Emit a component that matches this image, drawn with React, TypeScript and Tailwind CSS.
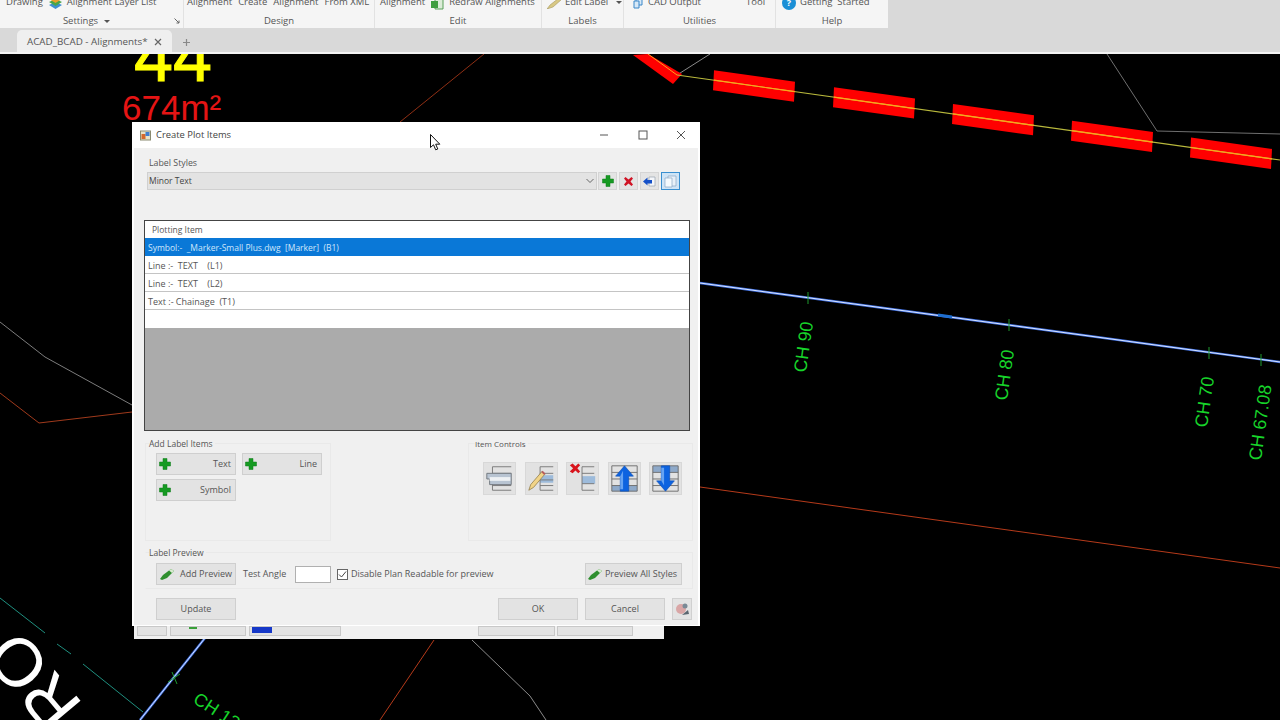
import type { ReactNode } from "react";

const uiFont = { fontFamily: '"Open Sans", "Noto Sans", sans-serif' };
const cadFont = '"Liberation Sans", Arial, sans-serif';

const PlusIcon = () => (
  <svg width="12" height="12" viewBox="0 0 12 12">
    <path d="M4 0.5h4v3.5h3.5v4H8v3.5H4V8H0.5V4H4z" fill="#169a22" stroke="#0f7d1a" strokeWidth="0.5" />
  </svg>
);

const MarkerIcon = () => (
  <svg width="16" height="14" viewBox="0 0 16 14">
    <path d="M1 12 L4 8 L12 2 L15 4 L8 11 L3 13z" fill="#2f8f2f" />
    <path d="M10 3.5 L12 2 L15 4 L13 6z" fill="#d8ead0" />
  </svg>
);

function Btn({ children, className }: { children: ReactNode; className: string }) {
  return (
    <div className={`flex items-center border border-[#cfcfcf] bg-[#e3e3e3] text-[#555] ${className}`}>
      {children}
    </div>
  );
}

function AddBtn({ label }: { label: string }) {
  return (
    <Btn className="h-[22px] w-[80px] justify-between pl-[2px] pr-[4px]">
      <PlusIcon />
      <span>{label}</span>
    </Btn>
  );
}

function ToolBtn({ children }: { children: ReactNode }) {
  return <div className="flex h-[18px] w-[19px] items-center justify-center border border-[#d5d5d5] bg-[#e4e4e4]">{children}</div>;
}

const TableLines = ({ x = 9 }: { x?: number }) => (
  <path d={`M${x} 4H29M${x} 4V29M${x} 11H29M${x} 18H29M${x} 24H29M${x} 29H29`} stroke="#777" strokeWidth="1" fill="none" />
);

function CtrlIcon({ kind }: { kind: string }) {
  return (
    <div className="h-[33px] w-[33px] border border-[#d8d8d8] bg-[#e2e2e2]">
      <svg width="31" height="31" viewBox="0 0 33 33">
        {kind === "slab" && (
          <g>
            <TableLines />
            <path d="M3 11H29V23H6V17H3z" fill="#b8c4d2" stroke="#70767d" strokeWidth="1" />
            <path d="M6 15H28V19H6z" fill="#eef1f4" />
          </g>
        )}
        {kind === "edit" && (
          <g>
            <rect x="15" y="13" width="14" height="8" fill="#9dbbdb" />
            <TableLines x={15} />
            <path d="M3 29 L5 23 L17 9 L20 12 L8 26z" fill="#f1d488" stroke="#8d7a45" strokeWidth="0.8" />
            <path d="M17 9 L20 12" stroke="#b85d5d" strokeWidth="2" />
          </g>
        )}
        {kind === "remove" && (
          <g>
            <rect x="16" y="14" width="14" height="8" fill="#9dbbdb" />
            <path d="M16 4H29M16 4V29M16 11H29M16 22H29M16 29H29" stroke="#777" fill="none" />
            <path d="M3 2.5 L6 0.5 L9 3.5 L12 0.5 L14 2.5 L11 5.5 L14 9 L12 11 L9 8 L6 11 L3 9 L6.500 5.500z" fill="#d8141c" />
          </g>
        )}
        {kind === "up" && (
          <g>
            <rect x="3" y="24" width="27" height="6" fill="#8ea9c9" />
            <path d="M3 3H30V30H3zM3 10H30M3 17H30M3 24H30" stroke="#6e6e6e" fill="none" />
            <path d="M16.500 3 L26 14 H21 V30 H12 V14 H7z" fill="#0d63e0" stroke="#0a4bb0" strokeWidth="0.6" />
            <path d="M15 8 L12 14 V28 H15z" fill="#66a3f2" />
          </g>
        )}
        {kind === "down" && (
          <g>
            <rect x="3" y="3" width="27" height="7" fill="#8ea9c9" />
            <path d="M3 3H30V30H3zM3 10H30M3 17H30M3 24H30" stroke="#6e6e6e" fill="none" />
            <path d="M16.500 30 L26 19 H21 V3 H12 V19 H7z" fill="#0d63e0" stroke="#0a4bb0" strokeWidth="0.6" />
            <path d="M12 5 H15 V24 L12 19z" fill="#66a3f2" />
          </g>
        )}
      </svg>
    </div>
  );
}

function RibbonPanel({ width, label, children, border = true }: { width: string; label: ReactNode; children: ReactNode; border?: boolean }) {
  return (
    <div className={`relative flex h-[28px] shrink-0 flex-col ${width} ${border ? "border-r border-[#e2e2e2]" : ""}`}>
      <div className="-mt-[5px] flex h-[15px] items-center whitespace-nowrap">{children}</div>
      <div className="mt-[4px] flex h-[14px] items-center justify-center">{label}</div>
    </div>
  );
}

function Ribbon() {
  return (
    <div className="flex h-[28px] overflow-hidden bg-[#d9d9d9] text-[9.500px] text-[#555]">
      <div className="flex w-[888px] bg-[#f5f5f5]">
        <RibbonPanel
          width="w-[184px]"
          label={
            <span className="flex items-center gap-[6px] pr-[10px]">
              Settings
              <span className="h-0 w-0 border-x-[3px] border-t-[3px] border-x-transparent border-t-[#555]" />
            </span>
          }
        >
          <span className="ml-[6px]">Drawing</span>
          <svg className="ml-[6px]" width="13" height="14" viewBox="0 0 13 14">
            <path d="M6.500 6 L13 9 L6.500 13 L0 9z" fill="#3f8fd0" />
            <path d="M6.500 3 L13 6 L6.500 10 L0 6z" fill="#4aa54a" />
            <path d="M6.500 0 L13 3 L6.500 7 L0 3z" fill="#e8a02c" />
          </svg>
          <span className="ml-[5px]">Alignment Layer List</span>
          <svg className="absolute left-[174px] top-[18px]" width="6" height="6" viewBox="0 0 6 6">
            <path d="M0.500 0.500L5 5M5 2.500V5H2.500" stroke="#666" fill="none" />
          </svg>
        </RibbonPanel>
        <RibbonPanel width="w-[191px]" label="Design">
          <span className="ml-[3px] flex gap-[6px]">
            <span>Alignment</span>
            <span>Create</span>
            <span>Alignment</span>
            <span>From XML</span>
          </span>
        </RibbonPanel>
        <RibbonPanel width="w-[167px]" label="Edit">
          <span className="ml-[5px]">Alignment</span>
          <svg className="ml-[6px]" width="14" height="14" viewBox="0 0 14 14">
            <path d="M4 2H12V13H4z" fill="#dcecd8" stroke="#58a058" />
            <path d="M0 5H7V12H0z" fill="#3f9e3f" />
          </svg>
          <span className="ml-[4px]">Redraw Alignments</span>
        </RibbonPanel>
        <RibbonPanel width="w-[82px]" label="Labels">
          <svg className="ml-[5px]" width="14" height="12" viewBox="0 0 14 12">
            <path d="M0 12 L3 8 L12 1 L14 3 L6 10z" fill="#d8c884" stroke="#9a8c50" strokeWidth="0.5" />
          </svg>
          <span className="ml-[4px]">Edit Label</span>
          <span className="ml-[8px] h-0 w-0 border-x-[3px] border-t-[3px] border-x-transparent border-t-[#555]" />
        </RibbonPanel>
        <RibbonPanel width="w-[152px]" label="Utilities">
          <svg className="ml-[9px]" width="10" height="12" viewBox="0 0 10 12">
            <path d="M3 1H9V8H3z" fill="#d6e8f7" stroke="#3b87c8" />
            <path d="M1 4H6V11H1z" fill="#d6e8f7" stroke="#3b87c8" />
          </svg>
          <span className="ml-[5px]">CAD Output</span>
          <span className="ml-[45px]">Tool</span>
        </RibbonPanel>
        <RibbonPanel width="w-[112px]" border={false} label="Help">
          <span className="ml-[6px] flex h-[14px] w-[14px] items-center justify-center rounded-full bg-[#1a8fd6] text-[9px] font-bold text-white">?</span>
          <span className="ml-[4px]">Getting&nbsp;&nbsp;Started</span>
        </RibbonPanel>
      </div>
    </div>
  );
}

function TabBar() {
  return (
    <div className="flex h-[26px] items-start border-b-2 border-[#f4f4f4] bg-[#d9d9d9] text-[9.800px] text-[#555]">
      <div className="ml-[17px] mt-[2px] flex h-[22px] w-[155px] items-center rounded-t-[5px] bg-[#efefef] pl-[10px] pt-[2px]">
        <span className="whitespace-nowrap">ACAD_BCAD - Alignments*</span>
        <svg className="ml-[6px]" width="8" height="8" viewBox="0 0 8 8">
          <path d="M1 1L7 7M7 1L1 7" stroke="#666" strokeWidth="1.2" />
        </svg>
      </div>
      <svg className="ml-[10px] mt-[10px]" width="9" height="9" viewBox="0 0 9 9">
        <path d="M4.500 1V8M1 4.500H8" stroke="#888" strokeWidth="1.2" />
      </svg>
    </div>
  );
}

const BAND_SLOPE = 0.141;
const bandStarts = [714, 834, 953, 1072, 1191];
const bandY = (x: number) => 75 + (x - 677) * BAND_SLOPE;
const bands = bandStarts.map((x) => {
  const end = x + 81;
  return `${x},${bandY(x) - 10} ${end},${bandY(end) - 10} ${end - 1},${bandY(end) + 10} ${x - 1},${bandY(x) + 10}`;
});

const ticks = [
  [808, 298],
  [1009, 325],
  [1209, 353],
  [1261, 360],
];

const chLabels = [
  { text: "CH 90", x: 806, y: 373 },
  { text: "CH 80", x: 1007, y: 401 },
  { text: "CH 70", x: 1207, y: 428 },
  { text: "CH 67.08", x: 1261, y: 461 },
];

function Drawing() {
  return (
    <svg className="h-full w-full" viewBox="0 54 1280 666">
      <text x="134" y="81" fontFamily={cadFont} fontSize="70" fill="#ffff00" stroke="#ffff00" strokeWidth="1">
        44
      </text>
      <text x="122" y="120" fontFamily={cadFont} fontSize="35" fill="#e51414">
        674m²
      </text>
      <path d="M484 54L400 122" stroke="#8f2f14" strokeWidth="1" />
      <path d="M677 75L710 54" stroke="#8a8a8a" strokeWidth="1" />
      <path d="M1107 54L1157 131L1280 134" stroke="#6f6f6f" strokeWidth="1" fill="none" />
      <polygon points="633,55 648,54 682,74 673,84" fill="#ff0000" />
      {bands.map((p) => (
        <polygon key={p} points={p} fill="#ff0000" />
      ))}
      <path d={`M677 75L1280 ${bandY(1280)}`} stroke="#b9b93c" strokeWidth="1.200" />
      {bandStarts.map((x) => (
        <path key={x} d={`M${x} ${bandY(x)}L${x + 81} ${bandY(x + 81)}`} stroke="#ffa31a" strokeWidth="1.200" />
      ))}
      <path d="M648 54L677 75" stroke="#ffa31a" strokeWidth="1" />

      <path d="M700 283L1280 362" stroke="#3f6fe0" strokeWidth="2.400" />
      <path d="M700 283L1280 362" stroke="#d8e4ff" strokeWidth="1" />
      <path d="M938 315L952 317" stroke="#1f6fd0" strokeWidth="3" />
      {ticks.map(([x, y]) => (
        <path key={x} d={`M${x} ${y - 6}V${y + 6}`} stroke="#1f9a2f" strokeWidth="1" />
      ))}
      {chLabels.map((l) => (
        <text key={l.text} x={l.x} y={l.y} transform={`rotate(-82 ${l.x} ${l.y})`} fontFamily={cadFont} fontSize="18" fill="#17d42a">
          {l.text}
        </text>
      ))}

      <path d="M0 322L45 357L132 405" stroke="#7c7c7c" strokeWidth="1" fill="none" />
      <path d="M0 393L39 423L132 412" stroke="#a03a1c" strokeWidth="1" fill="none" />
      <path d="M700 487L1280 568" stroke="#b53a1a" strokeWidth="1" />

      <path d="M0 598L45 633M57 644L71 654M83 664L143 712" stroke="#1f8f7f" strokeWidth="1" />
      <path d="M205 638L140 720" stroke="#3f6fe0" strokeWidth="2.400" />
      <path d="M205 638L140 720" stroke="#d8e4ff" strokeWidth="1" />
      <path d="M168 682L180 674M172 672L177 684" stroke="#1f9a2f" strokeWidth="1" />
      <text x="192" y="702" transform="rotate(33 192 702)" fontFamily={cadFont} fontSize="18" fill="#17d42a">
        CH 130
      </text>
      <text x="84" y="705" transform="rotate(-130 84 705)" fontFamily={cadFont} fontSize="68" fill="#ffffff">
        RO
      </text>
      <path d="M434 640L380 720" stroke="#b53a1a" strokeWidth="1" />
      <path d="M472 640L530 696L546 720" stroke="#8a8a8a" strokeWidth="1" fill="none" />
    </svg>
  );
}

function BehindWindow() {
  return (
    <div className="absolute left-[134px] top-[600px] flex h-[39px] w-[530px] items-end bg-[#f0f0f0] pb-[3px]">
      <div className="ml-[3px] h-[10px] w-[30px] border border-[#c8c8c8] bg-[#e3e3e3]" />
      <div className="relative ml-[3px] h-[10px] w-[76px] border border-[#c8c8c8] bg-[#e3e3e3]">
        <div className="absolute left-[18px] top-0 h-[2px] w-[8px] bg-[#3aa03a]" />
      </div>
      <div className="relative ml-[3px] h-[10px] w-[92px] border border-[#c8c8c8] bg-[#e3e3e3]">
        <div className="absolute left-[2px] top-0 h-[6px] w-[20px] bg-[#1638c8]" />
      </div>
      <div className="ml-[137px] h-[10px] w-[77px] border border-[#c8c8c8] bg-[#e3e3e3]" />
      <div className="ml-[2px] h-[10px] w-[76px] border border-[#c8c8c8] bg-[#e3e3e3]" />
    </div>
  );
}

const rows = ["Line :-  TEXT    (L1)", "Line :-  TEXT    (L2)", "Text :- Chainage  (T1)"];

function PlotDialog() {
  return (
    <div className="absolute left-[132px] top-[122px] flex h-[504px] w-[568px] flex-col bg-[#f0f0f0] text-[9px] text-[#555] shadow-[inset_2px_0_0_#fff,inset_-2px_0_0_#fff,inset_0_-1px_0_#fff]" style={uiFont}>
      <div className="flex h-[26px] shrink-0 items-center bg-white pl-[8px]">
        <svg width="11" height="11" viewBox="0 0 11 11">
          <rect x="0.500" y="1" width="10" height="9" fill="#e8e4c8" stroke="#8a8a70" />
          <rect x="1.500" y="4" width="4" height="5" fill="#d46a2c" />
          <rect x="5.500" y="2" width="4" height="4" fill="#3f7fd0" />
        </svg>
        <span className="ml-[5px] text-[9.400px] text-[#444]">Create Plot Items</span>
        <div className="ml-auto flex items-center">
          <svg width="10" height="10" viewBox="0 0 10 10" className="mr-[29px]">
            <path d="M1 5H9" stroke="#555" />
          </svg>
          <svg width="10" height="10" viewBox="0 0 10 10" className="mr-[28px]">
            <rect x="1" y="1" width="8" height="8" fill="none" stroke="#555" />
          </svg>
          <svg width="10" height="10" viewBox="0 0 10 10" className="mr-[14px]">
            <path d="M1 1L9 9M9 1L1 9" stroke="#555" />
          </svg>
        </div>
      </div>

      <div className="ml-[17px] mt-[8px] flex h-[14px] items-center pt-[1px] text-[8.800px]">Label Styles</div>
      <div className="ml-[15px] mt-[2px] flex h-[18px] items-center gap-[2px]">
        <div className="mr-[-1px] flex h-[18px] w-[450px] items-center justify-between border border-[#d0d0d0] bg-[#e3e3e3] pl-[1px] pr-[2px] text-[8.500px] text-[#444]">
          <span>Minor Text</span>
          <svg width="8" height="6" viewBox="0 0 8 6">
            <path d="M0.500 1L4 4.500L7.500 1" stroke="#666" fill="none" />
          </svg>
        </div>
        <ToolBtn>
          <PlusIcon />
        </ToolBtn>
        <ToolBtn>
          <svg width="11" height="11" viewBox="0 0 11 11">
            <path d="M1 2.500L2.500 1L5.500 3.500L8.500 1L10 2.500L7.500 5.500L10 8.500L8.500 10L5.500 7.500L2.500 10L1 8.500L3.500 5.500z" fill="#d01426" />
          </svg>
        </ToolBtn>
        <ToolBtn>
          <svg width="13" height="11" viewBox="0 0 13 11">
            <path d="M6 1H12V10H6z" fill="#f4f6fa" stroke="#9aa4b0" strokeWidth="0.7" />
            <path d="M0 5.500L4.500 1.500V4H9V7.500H4.500V9.500z" fill="#1450c8" />
          </svg>
        </ToolBtn>
        <div className="flex h-[18px] w-[19px] items-center justify-center border border-[#3a8fd0] bg-[#cfe4f6]">
          <svg width="13" height="13" viewBox="0 0 13 13">
            <path d="M4 1H12V11H4z" fill="#e8f0f8" stroke="#8aa8c4" strokeWidth="0.7" />
            <path d="M1 3H8V12H1z" fill="#f6fafd" stroke="#8aa8c4" strokeWidth="0.7" />
          </svg>
        </div>
      </div>

      <div className="ml-[12px] mt-[30px] flex h-[211px] w-[546px] shrink-0 flex-col border border-[#444] bg-[#ababab] text-[8.500px] text-[#555]">
        <div className="flex h-[17px] shrink-0 items-center bg-white pl-[7px] pt-[1px]">Plotting Item</div>
        <div className="flex h-[18px] shrink-0 items-center whitespace-pre bg-[#0a78d7] pl-[3px] pt-[2px] text-[#cfe6fb]">{"Symbol:-  _Marker-Small Plus.dwg  [Marker]  (B1)"}</div>
        {rows.map((r) => (
          <div key={r} className="flex h-[18px] shrink-0 items-center whitespace-pre border-b border-[#c4c4c4] bg-white pl-[3px] pt-[3px] text-[9px]">
            {r}
          </div>
        ))}
        <div className="h-[18px] shrink-0 bg-white" />
      </div>

      <div className="ml-[13px] mt-[12px] flex h-[98px] w-[548px] shrink-0 justify-between">
        <div className="h-full w-[186px] border border-[#e9e9e9]">
          <div className="ml-[3px] -mt-[7px] flex h-[14px] w-fit items-center bg-[#f0f0f0] pr-[2px] text-[8.500px]">Add Label Items</div>
          <div className="ml-[10px] mt-[2px] grid w-[166px] grid-cols-2 gap-x-[6px] gap-y-[4px]">
            <AddBtn label="Text" />
            <AddBtn label="Line" />
            <AddBtn label="Symbol" />
          </div>
        </div>
        <div className="h-full w-[225px] border border-[#e9e9e9]">
          <div className="ml-[6px] -mt-[7px] flex h-[14px] w-fit items-center bg-[#f0f0f0] pr-[2px] text-[8px]">Item Controls</div>
          <div className="ml-[14px] mt-[11px] flex gap-[8.500px]">
            <CtrlIcon kind="slab" />
            <CtrlIcon kind="edit" />
            <CtrlIcon kind="remove" />
            <CtrlIcon kind="up" />
            <CtrlIcon kind="down" />
          </div>
        </div>
      </div>

      <div className="ml-[13px] mt-[11px] h-[37px] w-[548px] shrink-0 border border-[#e9e9e9] border-l-transparent">
        <div className="ml-[3px] -mt-[7px] flex h-[14px] w-fit items-center bg-[#f0f0f0] pr-[2px] text-[8.500px]">Label Preview</div>
        <div className="ml-[10px] mt-[3px] flex h-[22px] items-center">
          <Btn className="h-[22px] w-[80px] justify-between pb-[1px] pl-[2px] pr-[3px]">
            <MarkerIcon />
            <span>Add Preview</span>
          </Btn>
          <span className="ml-[7px] w-[52px]">Test Angle</span>
          <div className="h-[17px] w-[36px] border border-[#b0b0b0] bg-white" />
          <div className="ml-[6px] flex h-[11px] w-[11px] items-center justify-center border border-[#666] bg-white">
            <svg width="9" height="9" viewBox="0 0 9 9">
              <path d="M1 4.500L3.500 7L8 1.500" stroke="#444" fill="none" />
            </svg>
          </div>
          <span className="ml-[3px]">Disable Plan Readable for preview</span>
          <Btn className="ml-auto mr-[10px] h-[22px] w-[97px] justify-between pb-[1px] pl-[1px] pr-[4px]">
            <MarkerIcon />
            <span>Preview All Styles</span>
          </Btn>
        </div>
      </div>

      <div className="ml-[24px] mt-[9px] flex h-[22px] items-center">
        <Btn className="h-[22px] w-[80px] justify-center">Update</Btn>
        <Btn className="ml-auto h-[22px] w-[80px] justify-center">OK</Btn>
        <Btn className="ml-[7px] h-[22px] w-[80px] justify-center">Cancel</Btn>
        <div className="ml-[7px] mr-[8px] flex h-[22px] w-[20px] items-center justify-center border border-[#d0d0d0] bg-[#e3e3e3]">
          <svg width="15" height="15" viewBox="0 0 15 15">
            <circle cx="6" cy="7" r="5" fill="#d9a6a6" />
            <circle cx="10" cy="4" r="2.500" fill="#7a8a96" />
            <path d="M7 13L13 8L14 12z" fill="#5a6670" />
          </svg>
        </div>
      </div>
    </div>
  );
}

export default function App() {
  return (
    <div className="relative flex h-[720px] w-[1280px] flex-col overflow-hidden bg-black" style={uiFont}>
      <Ribbon />
      <TabBar />
      <div className="min-h-0 flex-1 overflow-hidden">
        <Drawing />
      </div>
      <BehindWindow />
      <PlotDialog />
      <svg className="absolute left-[430px] top-[134px]" width="11" height="17" viewBox="0 0 11 17">
        <path d="M0.500 0.500V13.500L3.500 10.800L5.700 15.800L7.800 15L5.700 10.200H9.800z" fill="#fff" stroke="#111" strokeWidth="1" />
      </svg>
    </div>
  );
}
